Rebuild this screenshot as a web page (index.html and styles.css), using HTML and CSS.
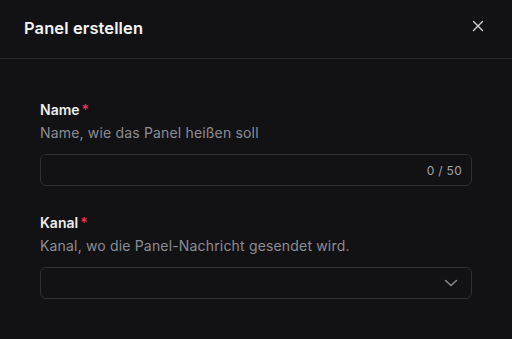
FILE: index.html
```html
<!DOCTYPE html>
<html lang="de">
<head>
<meta charset="utf-8">
<link rel="stylesheet" href="styles.css">
</head>
<body>
<div class="modal">
  <header class="modal-header">
    <h2 class="modal-title">Panel erstellen</h2>
    <button class="close-btn" aria-label="Schließen">
      <svg width="12" height="12" viewBox="0 0 12 12"><path d="M1.5 1.5 L10.5 10.5 M10.5 1.5 L1.5 10.5" stroke="#d4d4d8" stroke-width="1.4" stroke-linecap="round"/></svg>
    </button>
  </header>
  <div class="modal-body">
    <div class="field">
      <div class="label">Name<span class="req">*</span></div>
      <div class="desc">Name, wie das Panel heißen soll</div>
      <div class="input">
        <span class="counter">0 / 50</span>
      </div>
    </div>
    <div class="field">
      <div class="label">Kanal<span class="req">*</span></div>
      <div class="desc">Kanal, wo die Panel-Nachricht gesendet wird.</div>
      <div class="input select">
        <svg width="14" height="8" viewBox="0 0 14 8"><path d="M1.5 1.5 L7 6.5 L12.5 1.5" fill="none" stroke="#8b8b92" stroke-width="1.4" stroke-linecap="round" stroke-linejoin="round"/></svg>
      </div>
    </div>
  </div>
</div>
</body>
</html>
```
FILE: styles.css
```css
* { box-sizing: border-box; }
html, body {
  margin: 0;
  padding: 0;
  background: #121214;
  font-family: "Inter", "Lato", sans-serif;
}
.modal {
  width: 512px;
  height: 339px;
  background: #121214;
}
.modal-header {
  height: 59px;
  border-bottom: 1px solid #2c2c30;
  display: flex;
  align-items: center;
  justify-content: space-between;
  padding: 0 24px 2px 24px;
}
.modal-title {
  margin: 0;
  font-size: 16.5px;
  font-weight: 600;
  color: #f4f4f5;
  letter-spacing: 0.1px;
}
.close-btn {
  background: none;
  border: none;
  padding: 0;
  width: 12px;
  height: 12px;
  display: flex;
  margin-right: 4px;
  margin-top: -4px;
}
.modal-body {
  padding: 41px 40px 0 40px;
  display: flex;
  flex-direction: column;
  gap: 27px;
}
.field {
  display: flex;
  flex-direction: column;
}
.label {
  font-size: 14px;
  font-weight: 600;
  color: #ececef;
  line-height: 20px;
}
.req {
  color: #e5345a;
  margin-left: 2px;
}
.desc {
  margin-top: 3px;
  font-size: 14px;
  color: #8c8d94;
  line-height: 20px;
  letter-spacing: 0.17px;
}
.input {
  margin-top: 11px;
  height: 32px;
  border: 1px solid #2f2f34;
  border-radius: 6px;
  display: flex;
  align-items: center;
  justify-content: flex-end;
  padding: 0 9px;
}
.counter {
  font-size: 12px;
  color: #a1a1a8;
  letter-spacing: 0.3px;
}
.select {
  padding-right: 13px;
}
```
